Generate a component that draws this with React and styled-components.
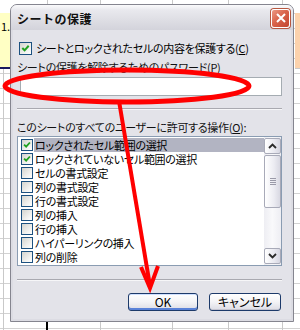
import React from 'react';
import styled, { createGlobalStyle } from 'styled-components';

const GlobalStyle = createGlobalStyle`
  html, body {
    margin: 0;
    padding: 0;
  }
  body {
    font-family: 'Noto Sans CJK JP', 'Noto Sans', sans-serif;
    font-size: 12px;
    color: #000;
  }
`;

const permissions = [
  { label: 'ロックされたセル範囲の選択', checked: true, selected: true },
  { label: 'ロックされていないセル範囲の選択', checked: true },
  { label: 'セルの書式設定' },
  { label: '列の書式設定' },
  { label: '行の書式設定' },
  { label: '列の挿入' },
  { label: '行の挿入' },
  { label: 'ハイパーリンクの挿入' },
  { label: '列の削除' },
];

const CheckMark = () => (
  <svg width="100%" height="100%" viewBox="0 0 12 12">
    <polyline points="2.5,5.5 5,8 9.5,3" fill="none" stroke="#21a121" strokeWidth="2.2" />
  </svg>
);

const Chevron = ({ up }) => (
  <svg width="9" height="6" viewBox="0 0 9 6">
    <polyline
      points={up ? '1,5 4.5,1.5 8,5' : '1,1 4.5,4.5 8,1'}
      fill="none"
      stroke="#2a2a2a"
      strokeWidth="1.8"
    />
  </svg>
);

const App = () => {
  return (
    <Sheet>
      <GlobalStyle />
      <SideColumn $width={10}>
        <YellowCell>1.</YellowCell>
      </SideColumn>

      <Dialog>
        <TitleBar>
          <Title>シートの保護</Title>
          <CloseButton>
            <svg width="10" height="10" viewBox="0 0 10 10">
              <path d="M1 1 L9 9 M9 1 L1 9" stroke="#fff" strokeWidth="2" />
            </svg>
          </CloseButton>
        </TitleBar>

        <Client>
          <CheckRow>
            <CheckBox $size={13}>
              <CheckMark />
            </CheckBox>
            <span>
              シートとロックされたセルの内容を保護する(<u>C</u>)
            </span>
          </CheckRow>

          <Label $top={6}>
            シートの保護を解除するためのパスワード(<u>P</u>)
          </Label>
          <PasswordInput />

          <Separator $top={12} />

          <Label $top={11}>
            このシートのすべてのユーザーに許可する操作(<u>O</u>):
          </Label>

          <ListBox>
            <Rows>
              {permissions.map((item) => (
                <Row key={item.label}>
                  <CheckBox $size={12}>{item.checked && <CheckMark />}</CheckBox>
                  <RowLabel $selected={item.selected}>{item.label}</RowLabel>
                </Row>
              ))}
            </Rows>
            <ScrollBar>
              <ScrollButton>
                <Chevron up />
              </ScrollButton>
              <Thumb>
                <Grip />
              </Thumb>
              <Track />
              <ScrollButton>
                <Chevron />
              </ScrollButton>
            </ScrollBar>
          </ListBox>

          <Separator $top={13} />

          <ButtonRow>
            <XpButton $width={70} $default>OK</XpButton>
            <XpButton $width={72}>キャンセル</XpButton>
          </ButtonRow>
        </Client>
      </Dialog>

      <SideColumn $width={6}>
        <PeachCell />
      </SideColumn>

      <Annotation width="300" height="330" viewBox="0 0 300 330">
        <ellipse cx="127" cy="86" rx="122" ry="16" fill="none" stroke="#ff0000" strokeWidth="5" />
        <line x1="119" y1="101" x2="150" y2="286" stroke="#ff0000" strokeWidth="4" />
        <polyline
          points="141,267 150,288 158,266"
          fill="none"
          stroke="#ff0000"
          strokeWidth="4"
          strokeLinejoin="miter"
        />
      </Annotation>
    </Sheet>
  );
};

const gridLine = 'linear-gradient(#c9c9c9, #c9c9c9)';

const Sheet = styled.div`
  position: relative;
  width: 300px;
  height: 330px;
  box-sizing: border-box;
  padding-top: 4px;
  display: flex;
  align-items: flex-start;
  overflow: hidden;
  background-color: #fff;
  background-image: linear-gradient(#000, #000), ${gridLine}, ${gridLine}, ${gridLine},
    ${gridLine}, ${gridLine}, ${gridLine},
    repeating-linear-gradient(to bottom, transparent 0 14px, #d2d2d2 14px 15px);
  background-size: 2px 8px, 1px 100%, 1px 100%, 1px 100%, 1px 100%, 1px 100%, 1px 100%,
    100% 100%;
  background-position: 46px 322px, 3px 68px, 47px 0, 100px 0, 172px 0, 228px 0, 282px 0,
    0 -1px;
  background-repeat: no-repeat;
`;

const SideColumn = styled.div`
  width: ${(p) => p.$width}px;
  flex: none;
  padding-top: 9px;
`;

const YellowCell = styled.div`
  height: 54px;
  background: #ffffc4;
  border-bottom: 2px solid #1a1a60;
  overflow: hidden;
  white-space: nowrap;
  font-size: 11px;
  line-height: 26px;
  padding-left: 1px;
`;

const PeachCell = styled.div`
  height: 55px;
  margin-left: 1px;
  background: #fcd2ac;
  border-bottom: 1px solid #c9c9c9;
`;

const Dialog = styled.div`
  width: 284px;
  height: 318px;
  flex: none;
  box-sizing: border-box;
  display: flex;
  flex-direction: column;
  border: 1px solid #85858f;
  border-radius: 7px 7px 0 0;
  background: #e3e3e9;
  box-shadow: inset 0 0 0 2px #dcdce3;
`;

const TitleBar = styled.div`
  height: 25px;
  flex: none;
  display: flex;
  align-items: center;
  justify-content: space-between;
  padding: 0 3px 0 6px;
  border-radius: 6px 6px 0 0;
  background: linear-gradient(to bottom, #fbfbfc 0%, #e9e9ee 20%, #dedee4 60%, #d3d3db 100%);
`;

const Title = styled.span`
  font-size: 12px;
  font-weight: bold;
  color: #111;
  letter-spacing: 0.5px;
  padding-top: 1px;
`;

const CloseButton = styled.div`
  width: 19px;
  height: 19px;
  margin-top: 1px;
  display: flex;
  align-items: center;
  justify-content: center;
  box-sizing: border-box;
  border: 1px solid #fff;
  border-radius: 3px;
  background: linear-gradient(135deg, #ec9a85 0%, #d9644b 45%, #c2442e 100%);
  box-shadow: 0 0 0 1px #b8573f;
`;

const Client = styled.div`
  flex: 1;
  display: flex;
  flex-direction: column;
  padding: 0 11px 0 6px;
  font-size: 11px;
  letter-spacing: -0.3px;
  font-feature-settings: 'palt';
  line-height: 12px;
`;

const CheckRow = styled.div`
  margin-top: 11px;
  height: 14px;
  display: flex;
  align-items: center;
  gap: 4px;
  padding-left: 2px;
  white-space: nowrap;
`;

const CheckBox = styled.span`
  width: ${(p) => p.$size}px;
  height: ${(p) => p.$size}px;
  flex: none;
  box-sizing: border-box;
  border: 1px solid #1c5180;
  background: linear-gradient(135deg, #d4d4ce 0%, #f4f4f2 70%, #fff 100%);
  display: flex;
`;

const Label = styled.div`
  margin-top: ${(p) => p.$top}px;
  height: 12px;
  white-space: nowrap;
  color: #111;
`;

const PasswordInput = styled.div`
  margin: 4px 0 0 3px;
  height: 19px;
  box-sizing: border-box;
  border: 1px solid #a5acb2;
  background: #fff;
`;

const Separator = styled.div`
  margin-top: ${(p) => p.$top}px;
  height: 1px;
  background: #a9a9b0;
  border-bottom: 1px solid #f6f6f8;
`;

const ListBox = styled.div`
  margin-top: 3px;
  height: 130px;
  box-sizing: border-box;
  border: 1px solid #8a9cb2;
  background: #fff;
  display: flex;
`;

const Rows = styled.div`
  flex: 1;
  padding-top: 1px;
  overflow: hidden;
`;

const Row = styled.div`
  height: 14px;
  display: flex;
  align-items: center;
  padding-left: 3px;
  white-space: nowrap;
`;

const RowLabel = styled.span`
  flex: 1;
  height: 14px;
  line-height: 14px;
  margin: 0 0 0 1px;
  padding-left: 1px;
  background: ${(p) => (p.$selected ? '#b2b4c2' : 'transparent')};
`;

const ScrollBar = styled.div`
  width: 17px;
  flex: none;
  display: flex;
  flex-direction: column;
  background: linear-gradient(to right, #eeeef3, #f9f9fb 50%, #eeeef3);
`;

const ScrollButton = styled.div`
  height: 16px;
  margin: 1px 0;
  box-sizing: border-box;
  border: 1px solid #a8aab8;
  border-radius: 2px;
  background: linear-gradient(to right, #ffffff, #eaeaf1 60%, #d6d6e1);
  display: flex;
  align-items: center;
  justify-content: center;
`;

const Thumb = styled.div`
  height: 53px;
  box-sizing: border-box;
  border: 1px solid #a8aab8;
  border-radius: 2px;
  background: linear-gradient(to right, #ffffff, #ececf2 60%, #d8d8e2);
  display: flex;
  align-items: center;
  justify-content: center;
`;

const Grip = styled.div`
  width: 6px;
  height: 7px;
  background: repeating-linear-gradient(to bottom, #9a9aa8 0 1px, transparent 1px 2px);
`;

const Track = styled.div`
  flex: 1;
`;

const ButtonRow = styled.div`
  margin-top: 12px;
  display: flex;
  justify-content: flex-end;
  gap: 11px;
  padding-right: 1px;
`;

const XpButton = styled.div`
  width: ${(p) => p.$width}px;
  height: 18px;
  box-sizing: border-box;
  display: flex;
  align-items: center;
  justify-content: center;
  border: 1px solid #1d3a6a;
  border-radius: 3px;
  background: linear-gradient(to bottom, #ffffff 0%, #f3f3f6 50%, #dcdce4 100%);
  box-shadow: ${(p) =>
    p.$default ? 'inset 0 -2px 0 #5a82d8, inset 0 1px 0 #cfe0ff' : 'inset 0 -1px 0 #c4c4d0'};
  font-size: 12px;
  letter-spacing: 0;
`;

const Annotation = styled.svg`
  position: absolute;
  left: 0;
  top: 0;
  pointer-events: none;
`;

export default App;
